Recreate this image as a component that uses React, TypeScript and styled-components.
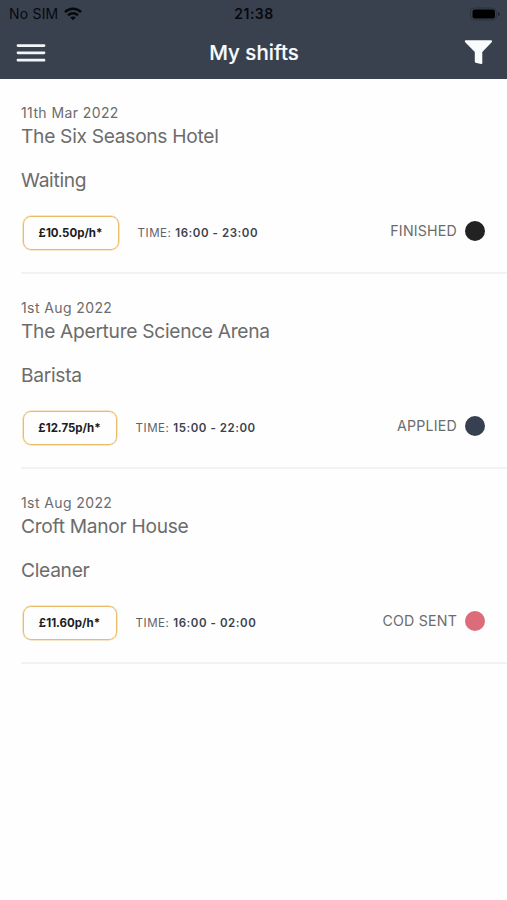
import React from "react";
import styled, { createGlobalStyle } from "styled-components";

const GlobalStyle = createGlobalStyle`
  *, *::before, *::after { box-sizing: border-box; }
  body {
    margin: 0;
    background: #fefefe;
    font-family: Inter, "Liberation Sans", sans-serif;
    overflow: hidden;
  }
`;

const Screen = styled.div`
  width: 100%;
  height: 900px;
  display: flex;
  flex-direction: column;
`;

const Header = styled.header`
  height: 79px;
  background: #39414f;
  flex: none;
`;

const StatusBar = styled.div`
  height: 27px;
  display: grid;
  grid-template-columns: 1fr auto 1fr;
  align-items: center;
  padding: 0 7px 0 9px;
  color: #07090d;
`;

const Carrier = styled.div`
  display: flex;
  align-items: center;
  gap: 6px;
  font-size: 14px;
  line-height: 27px;
  letter-spacing: 0.2px;
`;

const Clock = styled.time`
  margin-right: 1px;
  font-size: 14px;
  font-weight: 600;
  letter-spacing: 0.5px;
`;

const Battery = styled.svg`
  justify-self: end;
`;

const NavBar = styled.div`
  height: 52px;
  display: grid;
  grid-template-columns: 1fr auto 1fr;
  align-items: center;
  padding: 0 14px 0 16px;
`;

const IconButton = styled.button<{ $end?: boolean }>`
  display: flex;
  padding: ${(p) => (p.$end ? "0 0 2px" : "0")};
  border: 0;
  background: none;
  justify-self: ${(p) => (p.$end ? "end" : "start")};
`;

const Title = styled.h1`
  margin: 0 1px 0 0;
  font-size: 20.5px;
  font-weight: 500;
  line-height: 24px;
  letter-spacing: 0;
  color: #f7fafd;
  -webkit-text-stroke: 0.15px #f7fafd;
`;

const List = styled.ul`
  list-style: none;
  margin: 0;
  padding: 0 0 0 21px;
`;

const Shift = styled.li`
  height: 195px;
  padding-top: 25px;
  border-bottom: 2px solid #f2f2f2;
  color: #6c6c6c;

  &:last-child {
    height: 194.5px;
  }
`;

const ShiftDate = styled.div`
  font-size: 14px;
  line-height: 18px;
  letter-spacing: 0.4px;
`;

const Heading = styled.div<{ $gap?: number }>`
  margin-top: ${(p) => p.$gap ?? 0}px;
  font-size: 19.2px;
  line-height: 28px;
  letter-spacing: -0.3px;
`;

const Details = styled.div`
  display: flex;
  align-items: center;
  margin-top: 21px;
  padding: 0 22px 0 1.5px;
  height: 35px;
`;

const Rate = styled.div<{ $width: number }>`
  width: ${(p) => p.$width}px;
  height: 34px;
  display: flex;
  align-items: center;
  justify-content: center;
  border: 1.5px solid #e9bd68;
  box-shadow: 0 0 0 0.5px #f0cd8b;
  border-radius: 8px;
  color: #1c1c1c;
  font-size: 11.5px;
  font-weight: 700;
`;

const Time = styled.div`
  margin-left: 19px;
  font-size: 11.5px;
  letter-spacing: 0.56px;
  color: #5c626c;

  strong {
    font-weight: 600;
    color: #3b424d;
  }
`;

const Status = styled.div<{ $color: string }>`
  margin: 0 0 4px auto;
  display: flex;
  align-items: center;
  gap: 8px;
  font-size: 14.2px;
  letter-spacing: 0.2px;

  &::after {
    content: "";
    width: 20px;
    height: 20px;
    border-radius: 50%;
    background: ${(p) => p.$color};
  }
`;

const shifts = [
  { date: "11th Mar 2022", venue: "The Six Seasons Hotel", role: "Waiting", rate: "£10.50p/h*", rateWidth: 96, time: "16:00 - 23:00", status: "FINISHED", color: "#222222" },
  { date: "1st Aug 2022", venue: "The Aperture Science Arena", role: "Barista", rate: "£12.75p/h*", rateWidth: 94, time: "15:00 - 22:00", status: "APPLIED", color: "#364050" },
  { date: "1st Aug 2022", venue: "Croft Manor House", role: "Cleaner", rate: "£11.60p/h*", rateWidth: 94, time: "16:00 - 02:00", status: "COD SENT", color: "#dc6c79" },
];

export default function App() {
  return (
    <Screen>
      <GlobalStyle />
      <Header>
        <StatusBar>
          <Carrier>
            <span>No SIM</span>
            <svg width="18" height="14" viewBox="0 0 18 14" fill="none" stroke="#07090d" strokeWidth="2.4">
              <path d="M1 5.1C5.4 .7 12.6 .7 17 5.1" />
              <path d="M4 8.3C6.8 5.5 11.2 5.5 14 8.3" />
              <path d="M6.2 10.5C7.8 9 10.2 9 11.8 10.5L9 13.3Z" fill="#07090d" stroke="none" />
            </svg>
          </Carrier>
          <Clock>21:38</Clock>
          <Battery width="31" height="14" viewBox="0 0 31 14">
            <rect x="1.5" y="1" width="26" height="12" rx="4" fill="none" stroke="#2c333f" />
            <rect x="3.5" y="2.5" width="22.5" height="9" rx="2.3" fill="#000" />
            <path d="M29 5v4q1.8-.5 1.8-2t-1.8-2Z" fill="#1d222b" />
          </Battery>
        </StatusBar>
        <NavBar>
          <IconButton aria-label="Menu">
            <svg width="30" height="20" viewBox="0 0 30 20" stroke="#f1f6f9" strokeWidth="2.8" strokeLinecap="round">
              <path d="M2 2.6h26M2 9.8h26M2 17.2h26" />
            </svg>
          </IconButton>
          <Title>My shifts</Title>
          <IconButton $end aria-label="Filter">
            <svg width="29" height="26" viewBox="0 0 29 26" fill="#f9fcfd">
              <path d="M1.7 1.2H27q1.8.1.9 1.9L18.3 13v11.2q-.2 1-1.3.8L11.6 23.8q-.8-.4-.8-1.2V13L1 3.1Q.2 1.4 1.7 1.2Z" />
            </svg>
          </IconButton>
        </NavBar>
      </Header>
      <List>
        {shifts.map((s) => (
          <Shift key={s.venue}>
            <ShiftDate>{s.date}</ShiftDate>
            <Heading>{s.venue}</Heading>
            <Heading $gap={16}>{s.role}</Heading>
            <Details>
              <Rate $width={s.rateWidth}>{s.rate}</Rate>
              <Time>
                TIME: <strong>{s.time}</strong>
              </Time>
              <Status $color={s.color}>{s.status}</Status>
            </Details>
          </Shift>
        ))}
      </List>
    </Screen>
  );
}
